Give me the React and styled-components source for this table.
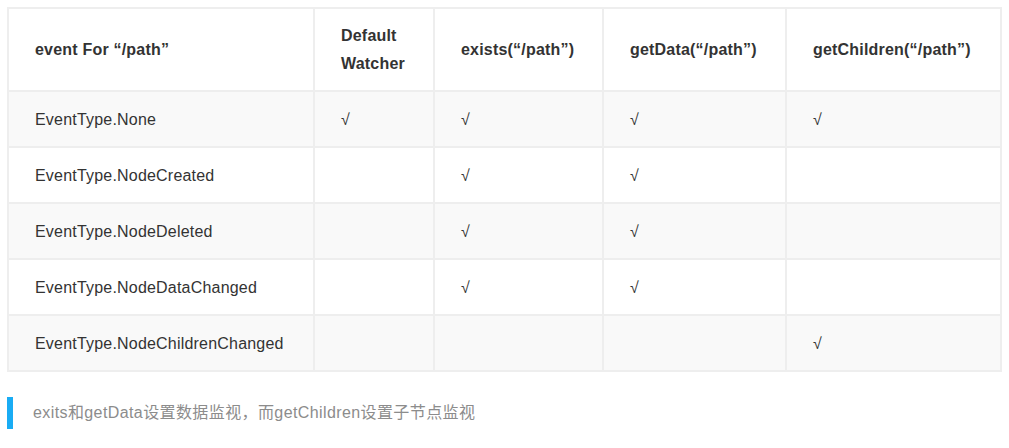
import React from "react";
import styled, { createGlobalStyle } from "styled-components";

const Global = createGlobalStyle`
  html, body { margin: 0; padding: 0; background: #fff; }
  body {
    font-family: "Liberation Sans", Arial, "Noto Sans CJK SC", sans-serif;
    color: #333;
  }
`;

const Page = styled.div`
  padding: 7px 9px 0 7px;
`;

const Table = styled.table`
  width: 993px;
  border-collapse: collapse;
  table-layout: fixed;
  font-size: 16px;
  letter-spacing: 0.2px;
  line-height: 28px;
`;

const Row = styled.tr`
  background: ${(p) => (p.$striped ? "#f9f9f9" : "#fff")};
`;

const HeadCell = styled.th`
  border: 2px solid #eee;
  padding: 13px 26px 12px;
  text-align: left;
  font-weight: bold;
  color: #333;
  vertical-align: middle;
`;

const Cell = styled.td`
  border: 2px solid #eee;
  padding: 14px 26px 12px;
  height: 28px;
  text-align: left;
  color: #333;
  vertical-align: middle;
`;

const Quote = styled.blockquote`
  margin: 25px 0 0;
  padding: 2px 0 2px 20px;
  border-left: 6px solid #19acf4;
  color: #8c8c8c;
  font-size: 16px;
  letter-spacing: 0.4px;
  line-height: 28px;
  font-family: "Liberation Sans", Arial, "Noto Sans CJK SC", sans-serif;
`;

const CHECK = "\u221A";

const headers = [
  "event For \u201C/path\u201D",
  "Default Watcher",
  "exists(\u201C/path\u201D)",
  "getData(\u201C/path\u201D)",
  "getChildren(\u201C/path\u201D)",
];

const widths = [306, 120, 169, 183, 215];

const rows = [
  ["EventType.None", true, true, true, true],
  ["EventType.NodeCreated", false, true, true, false],
  ["EventType.NodeDeleted", false, true, true, false],
  ["EventType.NodeDataChanged", false, true, true, false],
  ["EventType.NodeChildrenChanged", false, false, false, true],
];

export default function App() {
  return (
    <Page>
      <Global />
      <Table>
        <colgroup>
          {widths.map((w, i) => (
            <col key={i} style={{ width: w }} />
          ))}
        </colgroup>
        <thead>
          <Row>
            {headers.map((h) => (
              <HeadCell key={h}>{h}</HeadCell>
            ))}
          </Row>
        </thead>
        <tbody>
          {rows.map((r, i) => (
            <Row key={r[0]} $striped={i % 2 === 0}>
              <Cell>{r[0]}</Cell>
              {r.slice(1).map((v, j) => (
                <Cell key={j}>{v ? CHECK : ""}</Cell>
              ))}
            </Row>
          ))}
        </tbody>
      </Table>
      <Quote>exits和getData设置数据监视，而getChildren设置子节点监视</Quote>
    </Page>
  );
}
